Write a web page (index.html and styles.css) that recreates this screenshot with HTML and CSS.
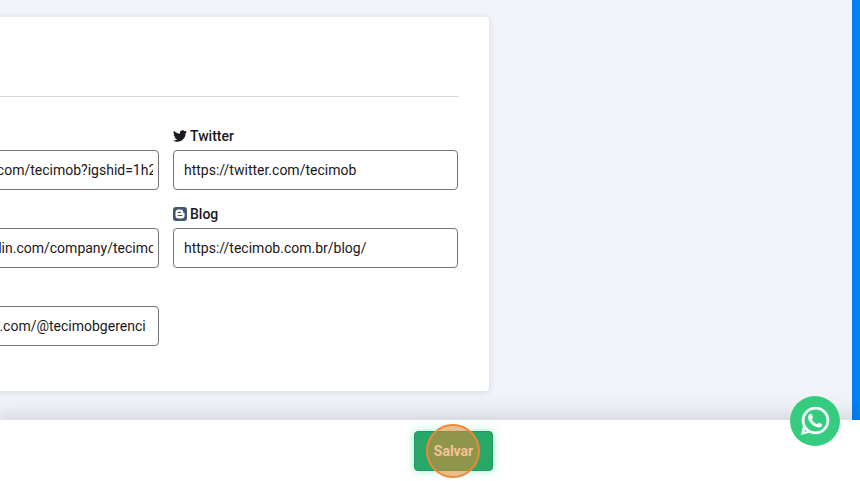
FILE: index.html
```html
<!DOCTYPE html>
<html lang="pt-BR">
<head>
  <meta charset="UTF-8">
  <meta name="viewport" content="width=device-width, initial-scale=1.0">
  <title>Redes sociais</title>
  <link rel="stylesheet" href="styles.css">
</head>
<body>
  <main class="content">
    <div class="card card-previous"></div>

    <form class="card" id="social-form">
      <div class="card-header"></div>

      <div class="fields">
        <div class="field">
          <input type="text" id="instagram" aria-label="Instagram" value="https://instagram.com/tecimob?igshid=1h2">
        </div>

        <div class="field">
          <label for="twitter">
            <svg class="icon" viewBox="0 0 512 512" aria-hidden="true">
              <path d="M459.37 151.716c.325 4.548.325 9.097.325 13.645 0 138.72-105.583 298.558-298.558 298.558-59.452 0-114.68-17.219-161.137-47.106 8.447.974 16.568 1.299 25.34 1.299 49.055 0 94.213-16.568 130.274-44.832-46.132-.975-84.792-31.188-98.112-72.772 6.498.974 12.995 1.624 19.818 1.624 9.421 0 18.843-1.3 27.614-3.573-48.081-9.747-84.143-51.98-84.143-102.985v-1.299c13.969 7.797 30.214 12.67 47.431 13.319-28.264-18.843-46.781-51.005-46.781-87.391 0-19.492 5.197-37.36 14.294-52.954 51.655 63.675 129.3 105.258 216.365 109.807-1.624-7.797-2.599-15.918-2.599-24.04 0-57.828 46.782-104.934 104.934-104.934 30.213 0 57.502 12.67 76.67 33.137 23.715-4.548 46.456-13.32 66.599-25.34-7.798 24.366-24.366 44.833-46.132 57.827 21.117-2.273 41.584-8.122 60.426-16.243-14.292 20.791-32.161 39.308-52.628 54.253z"/>
            </svg>
            Twitter
          </label>
          <input type="text" id="twitter" value="https://twitter.com/tecimob">
        </div>

        <div class="field">
          <input type="text" id="linkedin" aria-label="LinkedIn" value="https://www.linkedin.com/company/tecimob">
        </div>

        <div class="field">
          <label for="blog">
            <svg class="icon icon-blog" viewBox="0 0 14 14" aria-hidden="true">
              <rect width="14" height="14" rx="3"/>
              <path class="mark" d="M5.5 2.5h2.2c1.5 0 2.5 1.1 2.5 2.4 0 .8.3 1 .8 1 .4 0 .6.3.6.7v1.9c0 1.7-1.2 3-2.9 3H5.5c-1.7 0-3-1.3-3-3v-3c0-1.7 1.3-3 3-3z"/>
              <path class="line" d="M5.2 5.4h2.3M5.2 8.5h3.8"/>
            </svg>
            Blog
          </label>
          <input type="text" id="blog" value="https://tecimob.com.br/blog/">
        </div>

        <div class="field">
          <input type="text" id="tiktok" aria-label="TikTok" value="https://www.tiktok.com/@tecimobgerenci">
        </div>
      </div>
    </form>
  </main>

  <footer class="action-bar">
    <button type="submit" form="social-form" class="save">Salvar<span class="click-mark"></span></button>
  </footer>

  <a class="whatsapp" href="#" aria-label="WhatsApp">
    <svg viewBox="0 0 30 30" aria-hidden="true">
      <circle class="ring" cx="15.5" cy="14.5" r="12.4"/>
      <path d="M3.2 18.5L1 29l10.6-2.7-2-1.8-5 1.3 1.3-4.8z"/>
      <path d="M9.4 8.2c.5-.6 1.9-.7 2.3.1l1.3 3c.3.7-1.3 1.8-1.1 2.3 1 2.1 2.6 3.6 4.9 4.5.6.2 1.5-1.7 2.2-1.4l2.9 1.4c.5.3.2 1.8-.4 2.4-1.4 1.4-3.4 1.3-5.2.6-4-1.5-6.3-4-7.8-7.3-.8-1.9-.5-4.2.9-5.6z"/>
    </svg>
  </a>
</body>
</html>
```

FILE: styles.css
```css
* {
  box-sizing: border-box;
}

body {
  display: flex;
  flex-direction: column;
  min-height: 100vh;
  margin: 0;
  font-family: Roboto, "Liberation Sans", sans-serif;
  font-size: 14px;
  color: #1c1820;
}

.content {
  flex: 1;
  padding-bottom: 29px;
  overflow: hidden;
  background-color: #f0f3f8;
  border-right: 8px solid #0380f3;
}

.card {
  width: 75vw;
  margin-left: -156px;
  padding: 0 30px 45px;
  background-color: #ffffff;
  border-radius: 4px;
  box-shadow: 0 1px 6px rgba(40, 50, 70, 0.14);
}

.card-previous {
  padding: 0;
  margin-bottom: 17px;
}

.card-header {
  height: 80px;
  margin-bottom: 25px;
  border-bottom: 1px solid #d5d7dc;
}

.fields {
  display: grid;
  grid-template-columns: 1fr 1fr;
  grid-auto-rows: 68px;
  align-items: end;
  gap: 10px 14px;
  padding-right: 1px;
}

label {
  display: flex;
  align-items: center;
  gap: 3px;
  height: 28px;
  font-weight: 500;
}

.icon {
  width: 14px;
  height: 14px;
  fill: #1c1820;
}

.icon-blog {
  fill: #43566f;
}

.icon-blog .mark {
  fill: #ffffff;
}

.icon-blog .line {
  stroke: #43566f;
  stroke-width: 1.2;
  stroke-linecap: round;
}

input {
  display: block;
  width: 100%;
  height: 40px;
  padding: 0 5px 0 10px;
  border: 1px solid #75757a;
  border-radius: 4px;
  background-color: #ffffff;
  color: inherit;
  font: inherit;
}

.action-bar {
  position: relative;
  display: flex;
  justify-content: flex-end;
  padding: 11px 367px 10px 0;
  background-color: #ffffff;
  box-shadow: 0 0 20px 4px rgba(0, 0, 0, 0.14);
}

.save {
  position: relative;
  width: 79px;
  height: 40px;
  padding: 0;
  border: 1px solid #1f9a60;
  border-radius: 4px;
  background-color: #27a768;
  box-shadow: 0 0 8px rgba(60, 230, 150, 0.5);
  color: #ffffff;
  font: inherit;
  font-weight: 700;
  cursor: pointer;
}

/* click highlight over the button */
.click-mark {
  position: absolute;
  top: 50%;
  left: 50%;
  width: 54px;
  height: 54px;
  margin: -27px 0 0 -28px;
  border: 2px solid #ed8936;
  border-radius: 50%;
  background-color: rgba(240, 135, 50, 0.52);
}

.whatsapp {
  position: fixed;
  right: 20px;
  bottom: 35px;
  display: flex;
  align-items: center;
  justify-content: center;
  width: 50px;
  height: 50px;
  border-radius: 50%;
  background-color: #35cc80;
}

.whatsapp svg {
  width: 30px;
  height: 30px;
  fill: #f2fff8;
}

.whatsapp .ring {
  fill: none;
  stroke: #f2fff8;
  stroke-width: 2.8;
}
```
